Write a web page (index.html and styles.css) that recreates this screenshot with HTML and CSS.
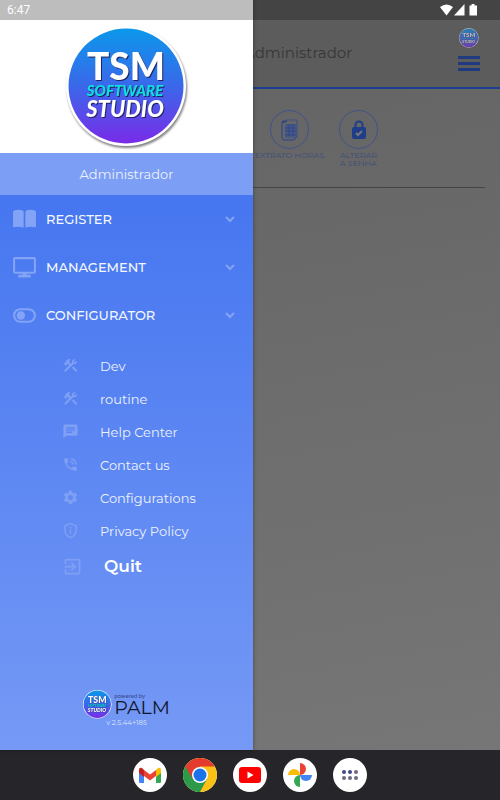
FILE: index.html
```
<!DOCTYPE html>
<html lang="en">
<head>
    <meta charset="UTF-8">
    <meta name="viewport" content="width=device-width, initial-scale=1.0">
    <title>TSM Software Studio</title>
    <link rel="stylesheet" href="styles.css">
</head>
<body>
    <!-- Shared shapes -->
    <svg class="defs" aria-hidden="true">
        <defs>
            <linearGradient id="logo-fill" x1="0" y1="0" x2="0" y2="1">
                <stop offset="0" stop-color="#0b98ea"/>
                <stop offset="0.5" stop-color="#3a68ea"/>
                <stop offset="1" stop-color="#7a2be8"/>
            </linearGradient>
        </defs>
        <symbol id="logo" viewBox="0 0 122 122">
            <circle cx="60" cy="60" r="60" fill="#fff"/>
            <circle cx="60" cy="60" r="57.5" fill="url(#logo-fill)"/>
            <g class="logo-text" text-anchor="middle">
                <text x="60" y="54" font-size="37" fill="#fff">TSM</text>
                <text x="59" y="70" font-size="15" font-style="italic" fill="#0fdfe0">SOFTWARE</text>
                <text x="59" y="91" font-size="22" font-style="italic" fill="#fff">STUDIO</text>
            </g>
        </symbol>
        <symbol id="tools" viewBox="0 0 24 24">
            <path d="M13.78 15.3l6 6 2.11-2.16-6-6-2.11 2.16M17.5 10.1c-.39 0-.81-.05-1.14-.19L4.97 21.25l-2.11-2.11 7.41-7.4L8.5 9.96l-.72.7-1.45-1.41v2.86l-.7.7-3.52-3.56.7-.7h2.81l-1.4-1.41 3.56-3.56c1.17-1.17 3.05-1.17 4.22 0L9.89 5.74l1.41 1.4-.71.71 1.79 1.78 1.82-1.88c-.14-.33-.2-.75-.2-1.12 0-1.97 1.56-3.52 3.5-3.52.59 0 1.11.14 1.58.42L16.41 6.2l1.5 1.5 2.67-2.67c.28.47.42.97.42 1.6 0 1.92-1.55 3.47-3.5 3.47z"/>
        </symbol>
        <symbol id="chevron" viewBox="0 0 12 12">
            <path d="M2 4l4 4 4-4" fill="none" stroke="currentColor" stroke-width="2"/>
        </symbol>
    </svg>

    <div class="screen">
        <!-- Page behind the drawer -->
        <main class="page">
            <header class="page-header">
                <h1>Administrador</h1>
                <div class="header-side">
                    <svg class="header-logo"><use href="#logo"/></svg>
                    <button class="menu-btn" aria-label="Menu"><span></span><span></span><span></span></button>
                </div>
            </header>
            <section class="shortcuts">
                <button class="shortcut">
                    <span class="shortcut-icon">
                        <svg width="18" height="22" viewBox="0 0 18 22" fill="none">
                            <path d="M4 2H2q-1 0-1 2v15q0 2 2 2h10l2-2" stroke="#26438f"/>
                            <path d="M4 5h12v14H4z" fill="#4a5984"/>
                            <path d="M5 1h11v18" stroke="#3d508a"/>
                            <path d="M6 6h8M4 9h11M4 12h11M4 16h11M8 7v10M12 7v10" stroke="#2f4687"/>
                            <path d="M1 3h4V1" stroke="#1f3a80"/>
                        </svg>
                    </span>
                    <span class="shortcut-label">EXTRATO HORAS</span>
                </button>
                <button class="shortcut">
                    <span class="shortcut-icon">
                        <svg width="16" height="20" viewBox="0 0 16 20">
                            <rect x="1" y="7" width="14" height="12" rx="2" fill="#1f3d88"/>
                            <path d="M4.500 8V5a3.500 3.500 0 0 1 7 0v3" fill="none" stroke="#1f3d88" stroke-width="2"/>
                            <path d="M5 13l2 2 4-4" fill="none" stroke="#777" stroke-width="2"/>
                        </svg>
                    </span>
                    <span class="shortcut-label">ALTERAR<br>A SENHA</span>
                </button>
            </section>
            <hr>
        </main>

        <aside class="drawer">
            <div class="drawer-logo"><svg width="122" height="122"><use href="#logo"/></svg></div>
            <div class="drawer-user">Administrador</div>

            <nav class="menu">
                <button class="group">
                    <svg class="group-icon" viewBox="0 0 24 24">
                        <path d="M1 5q0-2 2-2 5-1 8.200 1v16Q7 18 1 19.500zM23 5q0-2-2-2-5-1-8.200 1v16q4.200-2 10.200-.5z"/>
                    </svg>
                    <span>REGISTER</span>
                    <svg class="chevron"><use href="#chevron"/></svg>
                </button>
                <button class="group">
                    <svg class="group-icon" viewBox="0 0 24 24">
                        <rect x="2" y="3" width="20" height="14" rx="1" fill="none" stroke="currentColor" stroke-width="2"/>
                        <path d="M10 17h4v2h4v2.500H6V19h4z"/>
                    </svg>
                    <span>MANAGEMENT</span>
                    <svg class="chevron"><use href="#chevron"/></svg>
                </button>
                <button class="group">
                    <svg class="group-icon" viewBox="0 0 24 24">
                        <rect x="2" y="6" width="20" height="12" rx="6" fill="none" stroke="currentColor" stroke-width="2"/>
                        <circle cx="8.500" cy="12" r="4"/>
                    </svg>
                    <span>CONFIGURATOR</span>
                    <svg class="chevron"><use href="#chevron"/></svg>
                </button>

                <ul class="submenu">
                    <li><a href="#"><svg><use href="#tools"/></svg>Dev</a></li>
                    <li><a href="#"><svg><use href="#tools"/></svg>routine</a></li>
                    <li><a href="#">
                        <svg viewBox="0 0 24 24"><path d="M20 2H4c-1.100 0-1.990.9-1.990 2L2 22l4-4h14c1.100 0 2-.9 2-2V4c0-1.100-.9-2-2-2zM6 9h12v2H6V9zm8 5H6v-2h8v2zm4-6H6V6h12v2z"/></svg>Help Center</a></li>
                    <li><a href="#">
                        <svg viewBox="0 0 24 24"><path d="M20 15.500c-1.250 0-2.450-.2-3.570-.57-.35-.11-.74-.03-1.020.24l-2.200 2.200c-2.830-1.440-5.150-3.750-6.590-6.590l2.200-2.210c.28-.26.36-.65.25-1C8.700 6.450 8.500 5.250 8.500 4c0-.55-.45-1-1-1H4c-.55 0-1 .45-1 1 0 9.390 7.610 17 17 17 .55 0 1-.45 1-1v-3.500c0-.55-.45-1-1-1zM19 12h2c0-4.970-4.030-9-9-9v2c3.870 0 7 3.130 7 7zm-4 0h2c0-2.760-2.240-5-5-5v2c1.660 0 3 1.340 3 3z"/></svg>Contact us</a></li>
                    <li><a href="#">
                        <svg viewBox="0 0 24 24"><path d="M19.140 12.940c.04-.3.06-.61.06-.94 0-.32-.02-.64-.07-.94l2.030-1.580c.18-.14.23-.41.12-.61l-1.920-3.320c-.12-.22-.37-.29-.59-.22l-2.390.96c-.5-.38-1.030-.7-1.620-.94l-.36-2.540c-.04-.24-.24-.41-.48-.41h-3.840c-.24 0-.43.17-.47.41l-.36 2.540c-.59.24-1.130.57-1.620.94l-2.390-.96c-.22-.08-.47 0-.59.22L2.740 8.870c-.12.21-.08.47.12.61l2.030 1.580c-.05.3-.09.63-.09.94s.02.64.07.94l-2.030 1.580c-.18.14-.23.41-.12.61l1.920 3.320c.12.22.37.29.59.22l2.390-.96c.5.38 1.030.7 1.620.94l.36 2.540c.05.24.24.41.48.41h3.840c.24 0 .44-.17.47-.41l.36-2.540c.59-.24 1.130-.56 1.620-.94l2.390.96c.22.08.47 0 .59-.22l1.920-3.320c.12-.22.07-.47-.12-.61l-2.010-1.580zM12 15.600c-1.980 0-3.600-1.620-3.600-3.600s1.620-3.600 3.600-3.600 3.600 1.620 3.600 3.600-1.620 3.600-3.600 3.600z"/></svg>Configurations</a></li>
                    <li><a href="#">
                        <svg viewBox="0 0 24 24"><path d="M12 1L3 5v6c0 5.550 3.840 10.740 9 12 5.160-1.260 9-6.450 9-12V5l-9-4zm7 10c0 4.520-2.980 8.690-7 9.930-4.020-1.240-7-5.410-7-9.930V6.300l7-3.110 7 3.110V11zM11 7h2v2h-2zm0 4h2v6h-2z"/></svg>Privacy Policy</a></li>
                </ul>

                <button class="quit">
                    <svg viewBox="0 0 24 24"><path d="M10.090 15.590L11.500 17l5-5-5-5-1.410 1.410L12.670 11H3v2h9.670l-2.580 2.590zM19 3H5c-1.110 0-2 .9-2 2v4h2V5h14v14H5v-4H3v4c0 1.100.89 2 2 2h14c1.100 0 2-.9 2-2V5c0-1.100-.9-2-2-2z"/></svg>
                    Quit
                </button>
            </nav>

            <footer class="drawer-footer">
                <div class="brand">
                    <svg width="29" height="29"><use href="#logo"/></svg>
                    <div>
                        <div class="powered">powered by</div>
                        <div class="palm">PALM</div>
                    </div>
                </div>
                <div class="version">v 2.5.44+185</div>
            </footer>
        </aside>

        <!-- System status bar -->
        <div class="statusbar">
            <span>6:47</span>
            <svg width="38" height="12" viewBox="0 0 38 12" fill="#fff">
                <path d="M0 3q6.500-5 13 0L6.500 11.500z"/>
                <path d="M24.500 0v11.500H14z"/>
                <path d="M31.500 0h3v1.500H37v10h-7.500v-10h2z"/>
            </svg>
        </div>
    </div>

    <!-- System dock -->
    <div class="dock">
        <button class="app" aria-label="Gmail">
            <svg viewBox="0 0 34 34">
                <path d="M6 12v12q0 1 1 1h4V14z" fill="#4285f4"/>
                <path d="M28 12v12q0 1-1 1h-4V14z" fill="#34a853"/>
                <path d="M23 12l2-2q3-1 3 2v3l-5 4z" fill="#fbbc04"/>
                <path d="M6 15v-3q0-3 3-2l2 2v7z" fill="#c5221f"/>
                <path d="M11 12l6 4.500 6-4.500v6l-6 4.500-6-4.500z" fill="#ea4335"/>
            </svg>
        </button>
        <button class="app" aria-label="Chrome">
            <svg viewBox="0 0 34 34">
                <circle cx="17" cy="17" r="17" fill="#fbc116"/>
                <path d="M17 17L2.280 8.500A17 17 0 0 0 17 34l7-13z" fill="#2d9a4b"/>
                <path d="M2.280 8.500A17 17 0 0 1 31.700 8.500H17l-7.500 12z" fill="#e33b2e"/>
                <circle cx="17" cy="17" r="8" fill="#fff"/>
                <circle cx="17" cy="17" r="6.500" fill="#1a73e8"/>
            </svg>
        </button>
        <button class="app" aria-label="YouTube">
            <svg viewBox="0 0 34 34">
                <rect x="6" y="9" width="22" height="16" rx="3" fill="#f00"/>
                <path d="M14.500 13.500v7l6-3.500z" fill="#fff"/>
            </svg>
        </button>
        <button class="app" aria-label="Photos">
            <svg viewBox="0 0 34 34">
                <path d="M17 5v12a6 6 0 0 0 0-12z" fill="#ea4335"/>
                <path d="M29 17H17a6 6 0 0 0 12 0z" fill="#4285f4"/>
                <path d="M17 29V17a6 6 0 0 0 0 12z" fill="#34a853"/>
                <path d="M5 17h12a6 6 0 0 0-12 0z" fill="#fbbc04"/>
            </svg>
        </button>
        <button class="app" aria-label="All apps">
            <svg viewBox="0 0 34 34">
                <g fill="#3f4a85"><circle cx="11" cy="14" r="2"/><circle cx="17" cy="14" r="2"/></g>
                <circle cx="23" cy="14" r="2" fill="#80607e"/>
                <g fill="#6d6b80"><circle cx="11" cy="20" r="2"/><circle cx="17" cy="20" r="2"/><circle cx="23" cy="20" r="2"/></g>
            </svg>
        </button>
    </div>
</body>
</html>
```
FILE: styles.css
```
* {
    box-sizing: border-box;
}
body {
    margin: 0;
    min-height: 100vh;
    display: flex;
    flex-direction: column;
    font-family: Montserrat, Inter, sans-serif;
    background-color: #25252a;
}
button {
    font-family: inherit;
    background: none;
    border: none;
    padding: 0;
    cursor: pointer;
}
svg {
    display: block;
    flex-shrink: 0;
}
.defs {
    position: absolute;
    width: 0;
    height: 0;
}
.logo-text {
    font-family: Lato, sans-serif;
    font-weight: 900;
    filter: drop-shadow(1px 1px 0 #1f2360);
}
.screen {
    position: relative;
    flex: 1;
    display: grid;
}

/* status bar lies over both the page and the drawer */
.statusbar {
    position: absolute;
    z-index: 2;
    top: 0;
    left: 0;
    right: 0;
    height: 20px;
    padding: 0 22px 0 7px;
    display: flex;
    align-items: center;
    justify-content: space-between;
    background-color: rgba(0, 0, 0, 0.26);
    color: #fff;
    font-family: Roboto, sans-serif;
    font-size: 12px;
}

/* page */
.page {
    grid-area: 1 / 1;
    background: linear-gradient(170deg, #626262, #767676);
}
.page-header {
    display: flex;
    justify-content: space-between;
    height: 89px;
    padding: 28px 20px 0 244px;
    background-color: #5c5c5c;
    border-bottom: 2px solid #1f3d91;
}
.page-header h1 {
    margin: 15px 0 0;
    font-size: 15px;
    line-height: 20px;
    font-weight: 400;
    color: #373737;
}
.header-side {
    display: flex;
    flex-direction: column;
    align-items: center;
    gap: 8px;
}
.header-logo {
    width: 20px;
    height: 20px;
    opacity: 0.6;
}
.menu-btn {
    display: flex;
    flex-direction: column;
    gap: 3px;
}
.menu-btn span {
    width: 22px;
    height: 3px;
    background-color: #1f3a80;
}
.shortcuts {
    display: flex;
    height: 98px;
    padding: 21px 0 0 255px;
}
.shortcut {
    width: 69px;
    display: flex;
    flex-direction: column;
    align-items: center;
    gap: 2px;
}
.shortcut-icon {
    width: 39px;
    height: 39px;
    display: flex;
    align-items: center;
    justify-content: center;
    border: 1px solid #42528a;
    border-radius: 50%;
}
.shortcut-label {
    font-size: 8px;
    line-height: 8px;
    color: #3e4c7c;
    text-align: left;
    white-space: nowrap;
}
.page hr {
    margin: 0 15px 0 0;
    border: none;
    border-top: 1px solid #454545;
}

/* drawer */
.drawer {
    grid-area: 1 / 1;
    z-index: 1;
    width: 253px;
    display: flex;
    flex-direction: column;
    background: linear-gradient(#3c6fef, #4676f0 26%, #7599f5);
    box-shadow: 0 0 4px rgba(0, 0, 0, 0.4);
}
.drawer-logo {
    height: 153px;
    padding-top: 26px;
    display: flex;
    justify-content: center;
    background-color: #fff;
}
.drawer-logo svg {
    overflow: visible;
    filter: drop-shadow(1px 2px 1px rgba(0, 0, 0, 0.5));
}
.drawer-user {
    padding: 11px 0;
    text-align: center;
    font-size: 13px;
    line-height: 20px;
    color: #edf2fe;
    background-color: #7c9ef4;
}
.menu {
    display: flex;
    flex-direction: column;
}
.group {
    height: 48px;
    padding: 0 17px 0 12px;
    display: flex;
    align-items: center;
    gap: 9px;
    color: #f4f7ff;
    font-size: 13px;
    font-weight: 500;
}
.group-icon {
    width: 25px;
    height: 25px;
    color: #83a4f6;
    fill: currentColor;
}
.chevron {
    width: 12px;
    height: 12px;
    margin-left: auto;
    color: #83a4f6;
}
.submenu {
    list-style: none;
    margin: 0;
    padding: 10px 0 0;
}
.submenu a {
    height: 33px;
    padding-left: 62px;
    display: flex;
    align-items: center;
    gap: 21px;
    color: #edf2fe;
    font-size: 13px;
    text-decoration: none;
}
.submenu svg {
    width: 17px;
    height: 17px;
    fill: #7f9ff5;
}
.quit {
    height: 38px;
    padding-left: 62px;
    display: flex;
    align-items: center;
    gap: 21px;
    color: #fff;
    font-size: 17px;
    font-weight: 600;
}
.quit svg {
    width: 21px;
    height: 21px;
    fill: #7f9ff5;
}
.drawer-footer {
    margin-top: auto;
    padding: 20px 0 23px;
    display: flex;
    flex-direction: column;
    align-items: center;
}
.brand {
    display: flex;
    align-items: center;
    gap: 2px;
}
.powered {
    font-family: Lato, sans-serif;
    font-size: 6px;
    line-height: 7px;
    color: #33488c;
}
.palm {
    font-size: 19px;
    line-height: 18px;
    font-weight: 400;
    color: #10162c;
}
.version {
    font-size: 7px;
    line-height: 8px;
    color: #dce6fd;
}

/* dock */
.dock {
    height: 50px;
    display: flex;
    align-items: center;
    justify-content: center;
    gap: 16px;
    background-color: #25252a;
}
.app {
    width: 34px;
    height: 34px;
    border-radius: 50%;
    background-color: #fff;
}
```
